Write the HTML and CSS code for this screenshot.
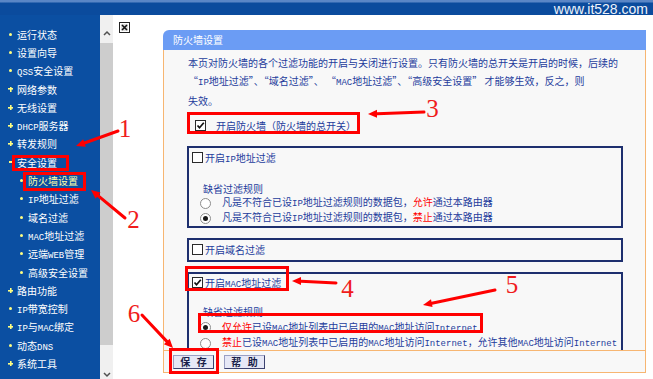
FILE: index.html
```html
<!DOCTYPE html>
<html lang="zh-CN">
<head>
<meta charset="utf-8">
<title>防火墙设置</title>
<link rel="stylesheet" href="styles.css">
</head>
<body>
<div class="page">
  <header class="topbar">www.it528.com</header>
  <div class="layout">
    <nav class="sidebar">
      <ul class="nav">
        <li class="nav-item"><i class="b b-dot"></i><span>运行状态</span></li>
        <li class="nav-item"><i class="b b-dot"></i><span>设置向导</span></li>
        <li class="nav-item"><i class="b b-dot"></i><span><span class="en">QSS</span>安全设置</span></li>
        <li class="nav-item"><i class="b b-plus"></i><span>网络参数</span></li>
        <li class="nav-item"><i class="b b-plus"></i><span>无线设置</span></li>
        <li class="nav-item"><i class="b b-plus"></i><span><span class="en">DHCP</span>服务器</span></li>
        <li class="nav-item"><i class="b b-plus"></i><span>转发规则</span></li>
        <li class="nav-item"><i class="b b-minus"></i><span>安全设置</span></li>
        <li class="nav-item sub current"><i class="b b-dot"></i><span>防火墙设置</span></li>
        <li class="nav-item sub"><i class="b b-dot"></i><span><span class="en">IP</span>地址过滤</span></li>
        <li class="nav-item sub"><i class="b b-dot"></i><span>域名过滤</span></li>
        <li class="nav-item sub"><i class="b b-dot"></i><span><span class="en">MAC</span>地址过滤</span></li>
        <li class="nav-item sub"><i class="b b-dot"></i><span>远端<span class="en">WEB</span>管理</span></li>
        <li class="nav-item sub"><i class="b b-dot"></i><span>高级安全设置</span></li>
        <li class="nav-item"><i class="b b-plus"></i><span>路由功能</span></li>
        <li class="nav-item"><i class="b b-dot"></i><span><span class="en">IP</span>带宽控制</span></li>
        <li class="nav-item"><i class="b b-plus"></i><span><span class="en">IP</span>与<span class="en">MAC</span>绑定</span></li>
        <li class="nav-item"><i class="b b-dot"></i><span>动态<span class="en">DNS</span></span></li>
        <li class="nav-item"><i class="b b-plus"></i><span>系统工具</span></li>
      </ul>
    </nav>
    <div class="scrollbar">
      <div class="sb-up"><svg width="8" height="6" viewBox="0 0 8 6"><polyline points="1,5 4,2 7,5" fill="none" stroke="#505050" stroke-width="1.5"/></svg></div>
      <div class="sb-thumb"></div>
      <div class="sb-down"><svg width="8" height="6" viewBox="0 0 8 6"><polyline points="1,1 4,4 7,1" fill="none" stroke="#505050" stroke-width="1.5"/></svg></div>
    </div>
    <main class="main">
      <svg class="broken" width="11" height="11" viewBox="0 0 11 11">
        <rect x="0.5" y="0.5" width="10" height="10" fill="#fff" stroke="#222"/>
        <rect x="2" y="2" width="7" height="7" fill="#ddd"/>
        <path d="M3 3 L8 8 M8 3 L3 8" stroke="#111" stroke-width="1.6"/>
      </svg>
      <section class="panel">
        <h2 class="panel-title">防火墙设置</h2>
        <div class="panel-body">
          <p class="intro">本页对防火墙的各个过滤功能的开启与关闭进行设置。只有防火墙的总开关是开启的时候，后续的<br>“<span class="en">IP</span>地址过滤”、“域名过滤”、 “<span class="en">MAC</span>地址过滤”、“高级安全设置” 才能够生效，反之，则<br>失效。</p>
          <div class="switch">
            <span class="cb checked"><svg width="9" height="9" viewBox="0 0 9 9"><path d="M1.5 4.5 L3.5 6.8 L7.8 1.8" fill="none" stroke="#111" stroke-width="1.7"/></svg></span>
            <span>开启防火墙（防火墙的总开关）</span>
          </div>
          <div class="group first">
            <div class="group-head"><span class="cb"></span><span>开启<span class="en">IP</span>地址过滤</span></div>
            <div class="rules">
              <div class="rules-title">缺省过滤规则</div>
              <div class="radio-row"><span class="rb"></span><span>凡是不符合已设<span class="en">IP</span>地址过滤规则的数据包，<span class="red">允许</span>通过本路由器</span></div>
              <div class="radio-row"><span class="rb on"></span><span>凡是不符合已设<span class="en">IP</span>地址过滤规则的数据包，<span class="red">禁止</span>通过本路由器</span></div>
            </div>
          </div>
          <div class="group compact">
            <div class="group-head"><span class="cb"></span><span>开启域名过滤</span></div>
          </div>
          <div class="group mac">
            <div class="group-head"><span class="cb checked"><svg width="9" height="9" viewBox="0 0 9 9"><path d="M1.5 4.5 L3.5 6.8 L7.8 1.8" fill="none" stroke="#111" stroke-width="1.7"/></svg></span><span>开启<span class="en">MAC</span>地址过滤</span></div>
            <div class="rules">
              <div class="rules-title">缺省过滤规则</div>
              <div class="radio-row"><span class="rb on"></span><span><span class="red">仅允许</span>已设<span class="en">MAC</span>地址列表中已启用的<span class="en">MAC</span>地址访问<span class="en">Internet</span></span></div>
              <div class="radio-row"><span class="rb"></span><span><span class="red">禁止</span>已设<span class="en">MAC</span>地址列表中已启用的<span class="en">MAC</span>地址访问<span class="en">Internet</span>，允许其他<span class="en">MAC</span>地址访问<span class="en">Internet</span></span></div>
            </div>
          </div>
        </div>
        <div class="panel-foot">
          <button class="btn" type="button">保 存</button>
          <button class="btn" type="button">帮 助</button>
        </div>
      </section>
    </main>
  </div>

  <svg class="annotations" width="653" height="379" viewBox="0 0 653 379">
    <g fill="none" stroke="#f00" stroke-width="3">
      <rect x="13.5" y="156.5" width="54" height="13"/>
      <rect x="24.5" y="173.5" width="60" height="16"/>
      <rect x="188.5" y="113.5" width="170" height="19"/>
      <rect x="186.5" y="267.5" width="101" height="22"/>
      <rect x="199.5" y="314.5" width="282" height="17"/>
      <rect x="170.5" y="349.5" width="47" height="23"/>
    </g>
    <g stroke="#f00" stroke-width="3" stroke-linecap="round">
      <line x1="118" y1="131" x2="84.5" y2="143"/>
      <line x1="125" y1="218" x2="98" y2="195.7"/>
      <line x1="424" y1="112" x2="377" y2="113.7"/>
      <line x1="336" y1="283" x2="301" y2="281.3"/>
      <line x1="495" y1="290" x2="431.8" y2="303.2"/>
      <line x1="142" y1="315" x2="166.8" y2="341.4"/>
    </g>
    <g fill="#f00">
      <polygon points="76,146 83.2,139.2 85.8,146.8"/>
      <polygon points="91,190 100.5,192.6 95.5,198.8"/>
      <polygon points="368,114 377,109.7 377,117.7"/>
      <polygon points="292,281 301,277 301,285"/>
      <polygon points="423,305 431,299.2 432.6,307.1"/>
      <polygon points="173,348 163.9,344.2 169.7,338.7"/>
    </g>
    <g class="num" fill="#f01c1c" text-anchor="middle">
      <text x="125" y="137">1</text>
      <text x="133.5" y="228">2</text>
      <text x="432.5" y="117">3</text>
      <text x="347.5" y="297">4</text>
      <text x="512" y="293">5</text>
      <text x="134" y="322">6</text>
    </g>
  </svg>
</div>
</body>
</html>
```

FILE: styles.css
```css
html, body {
  margin: 0;
  padding: 0;
}
body {
  font-family: "Noto Sans CJK SC", "Noto Sans", sans-serif;
  font-size: 10px;
  background: #fff;
}
.page {
  position: relative;
  width: 653px;
  height: 379px;
  overflow: hidden;
}
.topbar {
  height: 15px;
  box-sizing: border-box;
  padding: 4px 5px 0 0;
  text-align: right;
  background: linear-gradient(#5a86c6 0, #5a86c6 2px, #0b4b9d 3px);
  font: 14px/11px "Liberation Sans", Arial, sans-serif;
  color: #eef3fb;
}
.layout {
  display: flex;
  height: 364px;
}
.sidebar {
  width: 100px;
  flex: none;
  background: #0b4fa2;
  padding-top: 10px;
  box-sizing: border-box;
}
.nav {
  list-style: none;
  margin: 0;
  padding: 0;
}
.nav-item {
  display: flex;
  align-items: center;
  height: 18.3px;
  padding-left: 8px;
  color: #fff;
  white-space: nowrap;
}
.nav-item.sub {
  padding-left: 19px;
}
.nav-item.current {
  color: #ffffa8;
}
.b {
  width: 5px;
  height: 5px;
  margin-right: 4px;
  display: flex;
  align-items: center;
  justify-content: center;
  flex: none;
}
.b-dot::before {
  content: "";
  width: 3px;
  height: 3px;
  border-radius: 50%;
  background: #ffff80;
}
.b-plus {
  background:
    linear-gradient(#ffff80, #ffff80) center / 5px 1.6px no-repeat,
    linear-gradient(#ffff80, #ffff80) center / 1.6px 5px no-repeat;
}
.b-minus::before {
  content: "";
  width: 4px;
  height: 1.6px;
  background: #ffff80;
}
.en {
  font-family: "Liberation Mono", monospace;
  font-size: 9px;
}
.scrollbar {
  width: 13px;
  flex: none;
  background: #f0f0f0;
  display: flex;
  flex-direction: column;
}
.sb-up {
  height: 28px;
  box-sizing: border-box;
  padding-top: 15px;
  display: flex;
  justify-content: center;
  align-items: flex-start;
}
.sb-thumb {
  height: 302px;
  background: #cdcdcd;
}
.sb-down {
  flex: 1;
  box-sizing: border-box;
  padding-top: 27px;
  display: flex;
  justify-content: center;
  align-items: flex-start;
}
.main {
  flex: 1;
  display: flex;
  align-items: flex-start;
  background: #fff;
}
.broken {
  margin: 7px 0 0 6px;
  flex: none;
}
.panel {
  margin: 15px 0 0 33px;
  width: 483px;
  flex: none;
}
.panel-title {
  margin: 0;
  height: 20px;
  line-height: 20px;
  padding-left: 10px;
  background: #6b9cf4;
  border-top-left-radius: 6px;
  color: #fff;
  font-size: 10px;
  font-weight: normal;
}
.panel-body {
  height: 300px;
  overflow: hidden;
  padding: 0 22px 0 23px;
  background: #f8f8f8;
  border-left: 1px solid #f7b672;
  border-right: 1px solid #f7b672;
  color: #243c9c;
}
.intro {
  margin: 0;
  padding: 4px 0 0 1px;
  line-height: 17.5px;
  white-space: nowrap;
}
.switch {
  display: flex;
  align-items: center;
  height: 20px;
  margin-top: 6px;
  padding-left: 8px;
  white-space: nowrap;
}
.switch .cb {
  margin-right: 10px;
}
.cb {
  width: 11px;
  height: 11px;
  box-sizing: border-box;
  border: 1px solid #2a2a2a;
  background: #fff;
  display: flex;
  align-items: center;
  justify-content: center;
  flex: none;
}
.group {
  margin-top: 10px;
  border: 2px solid #1e2f6e;
}
.group.first {
  margin-top: 10.5px;
}
.group-head {
  display: flex;
  align-items: center;
  height: 18px;
  padding-left: 3px;
  white-space: nowrap;
}
.group.compact .group-head {
  height: 20px;
}
.group-head .cb {
  margin-right: 2px;
}
.rules {
  margin-top: 14.5px;
  padding-left: 11px;
  line-height: 15px;
}
.group.mac .rules {
  margin-top: 11.5px;
  line-height: 15.5px;
}
.rules-title {
  padding-left: 3px;
}
.group.mac .rules-title {
  line-height: 17px;
}
.radio-row {
  display: flex;
  align-items: center;
  height: 15px;
  white-space: nowrap;
}
.group.mac .radio-row {
  height: 15.5px;
}
.rb {
  width: 11px;
  height: 11px;
  box-sizing: border-box;
  border: 1px solid #8c8c8c;
  border-radius: 50%;
  background: #fff;
  margin-right: 11px;
  display: flex;
  align-items: center;
  justify-content: center;
  flex: none;
}
.rb.on::after {
  content: "";
  width: 5px;
  height: 5px;
  border-radius: 50%;
  background: #1a1a1a;
}
.red {
  color: #f00;
}
.panel-foot {
  display: flex;
  gap: 10px;
  height: 23px;
  box-sizing: border-box;
  padding: 4px 0 0 9px;
  border: 1px solid #f7b672;
  background: #f8f8f8;
}
.btn {
  width: 41px;
  height: 14px;
  box-sizing: border-box;
  margin: 0;
  padding: 0 0 0 2px;
  border: 1px solid;
  border-color: #9a9fc4 #3c4270 #3c4270 #9a9fc4;
  background: #e6e8f6;
  font: bold 10px/12px "Noto Sans CJK SC", sans-serif;
  color: #1a1f4a;
  letter-spacing: 2px;
}
.annotations {
  position: absolute;
  left: 0;
  top: 0;
  pointer-events: none;
}
.num {
  font-family: "Liberation Serif", serif;
  font-size: 25px;
}
```
